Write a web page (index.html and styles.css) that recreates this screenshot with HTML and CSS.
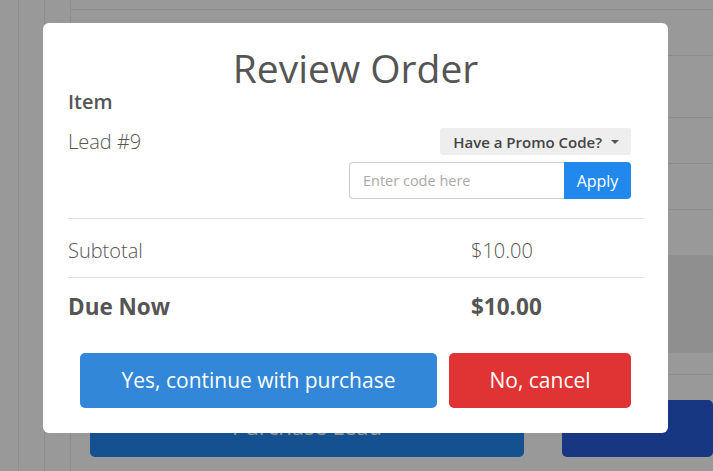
FILE: index.html
```html
<!DOCTYPE html>
<html lang="en">
<head>
<meta charset="utf-8">
<title>Review Order</title>
<link rel="stylesheet" href="styles.css">
</head>
<body>
<div class="page">
  <aside class="rail">
    <div class="rail-strip first"></div>
    <div class="rail-strip"></div>
    <div class="rail-strip"></div>
  </aside>
  <main class="content">
    <div class="trow r0"></div>
    <div class="trow r1"></div>
    <div class="trow r2"></div>
    <div class="trow r3"></div>
    <div class="trow r4"></div>
    <div class="panel"></div>
    <div class="trow r5"></div>
    <div class="page-actions">
      <button class="purchase">Purchase Lead</button>
      <button class="other"></button>
    </div>
  </main>
</div>

<div class="overlay"></div>

<div class="modal">
  <h2 class="title">Review Order</h2>
  <div class="label">Item</div>
  <div class="item-row">
    <div class="item-name">Lead #9</div>
    <div class="promo">
      <button class="promo-toggle">Have a Promo Code? <span class="caret"></span></button>
      <div class="promo-group">
        <input class="promo-input" type="text" placeholder="Enter code here">
        <button class="apply">Apply</button>
      </div>
    </div>
  </div>
  <div class="sum-row subtotal">
    <span>Subtotal</span>
    <span>$10.00</span>
  </div>
  <div class="sum-row due">
    <span>Due Now</span>
    <span>$10.00</span>
  </div>
  <div class="modal-actions">
    <button class="btn yes">Yes, continue with purchase</button>
    <button class="btn no">No, cancel</button>
  </div>
</div>
</body>
</html>
```

FILE: styles.css
```css
* { box-sizing: border-box; }

html, body {
  margin: 0;
  padding: 0;
}

body {
  width: 713px;
  height: 471px;
  overflow: hidden;
  background: #ffffff;
  font-family: "Open Sans", "Liberation Sans", sans-serif;
  color: #555555;
}

/* ---------- underlying page ---------- */
.page {
  display: flex;
  height: 471px;
}

.rail {
  display: flex;
  flex: 0 0 71px;
}

.rail-strip {
  width: 26px;
  border-right: 1px solid #e9e9e9;
}

.rail-strip.first {
  width: 19px;
}

.content {
  flex: 1;
  min-width: 0;
  display: flex;
  flex-direction: column;
}

.trow {
  border-bottom: 1px solid #e9e9e9;
}

.r0 { height: 10px; }
.r1 { height: 46px; }
.r2 { height: 62px; }
.r3 { height: 46px; }
.r4 { height: 46px; }

.panel {
  margin-top: 45px;
  height: 98px;
  background: #eeeeee;
}

.r5 { height: 22px; }

.page-actions {
  display: flex;
  margin-top: 25px;
  padding-left: 19px;
  gap: 38px;
}

.page-actions button {
  flex: 0 0 auto;
  height: 57px;
  border: 0;
  border-radius: 5px;
  font-family: "Open Sans", "Liberation Sans", sans-serif;
  font-size: 22px;
  color: #ffffff;
  padding: 0 0 5px;
}

.purchase {
  width: 434px;
  background: #2387f0;
}

.other {
  width: 151px;
  background: #285cd9;
  border-radius: 5px 0 0 5px;
}

.overlay {
  position: fixed;
  inset: 0;
  background: rgba(0, 0, 0, 0.4);
}

/* ---------- modal ---------- */
.modal {
  position: absolute;
  top: 23px;
  left: 43px;
  width: 625px;
  background: #ffffff;
  border-radius: 6px;
  padding: 25px 25px 25px;
}

.title {
  margin: 0;
  text-align: center;
  font-size: 39px;
  line-height: 40px;
  font-weight: 400;
  color: #555555;
}

.label {
  margin-top: 2px;
  font-size: 20px;
  line-height: 24px;
  font-weight: 600;
  color: #555555;
}

.item-row {
  display: flex;
  justify-content: space-between;
  align-items: flex-start;
  margin-top: 14px;
}

.item-name {
  font-size: 20px;
  line-height: 28px;
  font-weight: 300;
  color: #555555;
}

.promo {
  display: flex;
  flex-direction: column;
  align-items: flex-end;
  gap: 7px;
  padding-right: 12px;
}

.promo-toggle {
  display: flex;
  align-items: center;
  height: 27px;
  padding: 0 12px 0 13px;
  border: 0;
  border-radius: 3px;
  background: #eeeeee;
  font-family: "Open Sans", "Liberation Sans", sans-serif;
  font-size: 15px;
  font-weight: 600;
  color: #444444;
}

.caret {
  display: inline-block;
  margin-left: 9px;
  width: 0;
  height: 0;
  border-top: 4px solid #555555;
  border-left: 4px solid transparent;
  border-right: 4px solid transparent;
}

.promo-group {
  display: flex;
  height: 37px;
}

.promo-input {
  width: 215px;
  height: 37px;
  border: 1px solid #cccccc;
  border-right: 0;
  border-radius: 4px 0 0 4px;
  padding: 0 12px 0 13px;
  font-family: "Open Sans", "Liberation Sans", sans-serif;
  font-size: 14.5px;
  color: #555555;
  outline: none;
}

.promo-input::placeholder {
  color: #aaaaaa;
}

.apply {
  width: 67px;
  height: 37px;
  border: 0;
  border-radius: 0 4px 4px 0;
  background: #2188ee;
  color: #ffffff;
  font-family: "Open Sans", "Liberation Sans", sans-serif;
  font-size: 16px;
}

.sum-row {
  display: grid;
  grid-template-columns: 403px 1fr;
  border-top: 1px solid #dddddd;
}

.subtotal {
  margin-top: 19px;
  padding: 18px 0 12px;
  font-size: 20px;
  line-height: 28px;
  font-weight: 300;
}

.due {
  padding: 14px 0 0;
  font-size: 22.5px;
  line-height: 30px;
  font-weight: 700;
}

.modal-actions {
  display: flex;
  gap: 12px;
  margin-top: 31px;
  padding: 0 12px;
}

.btn {
  height: 55px;
  border: 0;
  border-radius: 5px;
  color: #ffffff;
  font-family: "Open Sans", "Liberation Sans", sans-serif;
  font-size: 21px;
  line-height: 27px;
}

.yes {
  width: 357px;
  background: #3287d8;
}

.no {
  width: 182px;
  background: #e03434;
}
```
